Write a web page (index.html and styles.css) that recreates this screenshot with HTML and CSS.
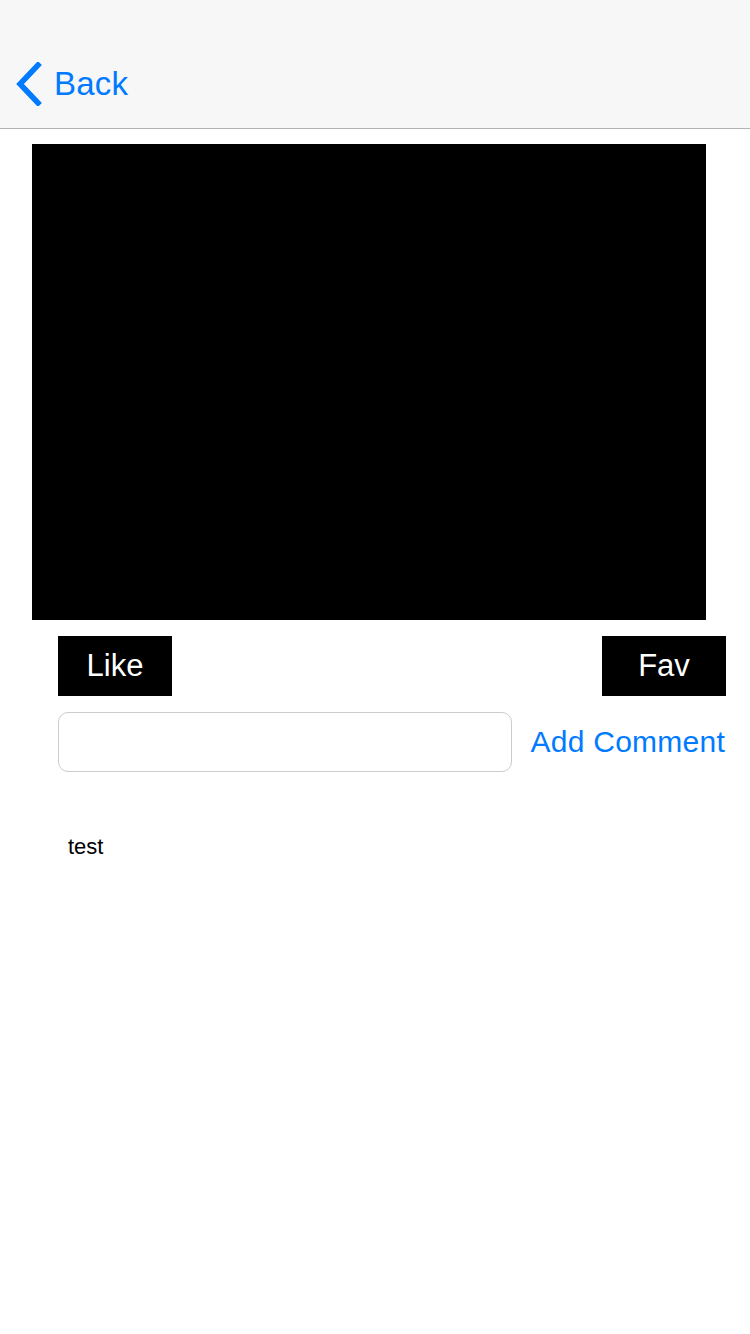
FILE: index.html
```html
<!DOCTYPE html>
<html>
<head>
<meta charset="utf-8">
<link rel="stylesheet" href="styles.css">
</head>
<body>
<header class="nav">
  <a class="back">
    <svg class="chev" width="28" height="44" viewBox="0 0 28 44"><path d="M24 3 L6 22 L24 41" fill="none" stroke="#007aff" stroke-width="5.5" stroke-linecap="square" stroke-linejoin="miter"/></svg>
    <span class="back-text">Back</span>
  </a>
</header>
<main class="content">
  <div class="video"></div>
  <div class="actions">
    <button class="btn like">Like</button>
    <button class="btn fav">Fav</button>
  </div>
  <div class="comment-row">
    <input class="comment-input" type="text">
    <span class="add">Add Comment</span>
  </div>
  <div class="comments">
    <div class="comment">test</div>
  </div>
</main>
</body>
</html>
```
FILE: styles.css
```css
html, body {
  margin: 0;
  padding: 0;
  background: #fff;
  font-family: "Liberation Sans", Arial, sans-serif;
}
.nav {
  background: #f7f7f7;
  border-bottom: 1px solid #b2b2b2;
  display: flex;
  align-items: center;
  padding-top: 40px;
  box-sizing: border-box;
  height: 129px;
}
.back {
  display: flex;
  align-items: center;
  margin-left: 14px;
  color: #007aff;
  height: 88px;
  margin-top: -1px;
}
.chev {
  display: block;
}
.back-text {
  font-size: 33px;
  margin-left: 12px;
  letter-spacing: 0.2px;
}
.content {
  padding-top: 15px;
}
.video {
  margin-left: 32px;
  width: 674px;
  height: 476px;
  background: #000;
}
.actions {
  display: flex;
  justify-content: space-between;
  margin: 16px 24px 0 58px;
}
.btn {
  background: #000;
  color: #fff;
  border: none;
  height: 60px;
  font-family: "Liberation Sans", Arial, sans-serif;
  font-size: 31px;
  padding: 0;
}
.like { width: 114px; }
.fav { width: 124px; }
.comment-row {
  display: flex;
  align-items: center;
  margin: 16px 24px 0 58px;
  justify-content: space-between;
}
.comment-input {
  width: 454px;
  height: 60px;
  box-sizing: border-box;
  border: 1px solid #cccccc;
  border-radius: 10px;
  margin: 0;
  outline: none;
}
.add {
  color: #007aff;
  font-size: 30px;
  letter-spacing: 0.25px;
  margin-right: 1px;
}
.comments {
  padding: 62px 0 0 68px;
}
.comment {
  font-size: 22px;
  color: #000;
}
```
